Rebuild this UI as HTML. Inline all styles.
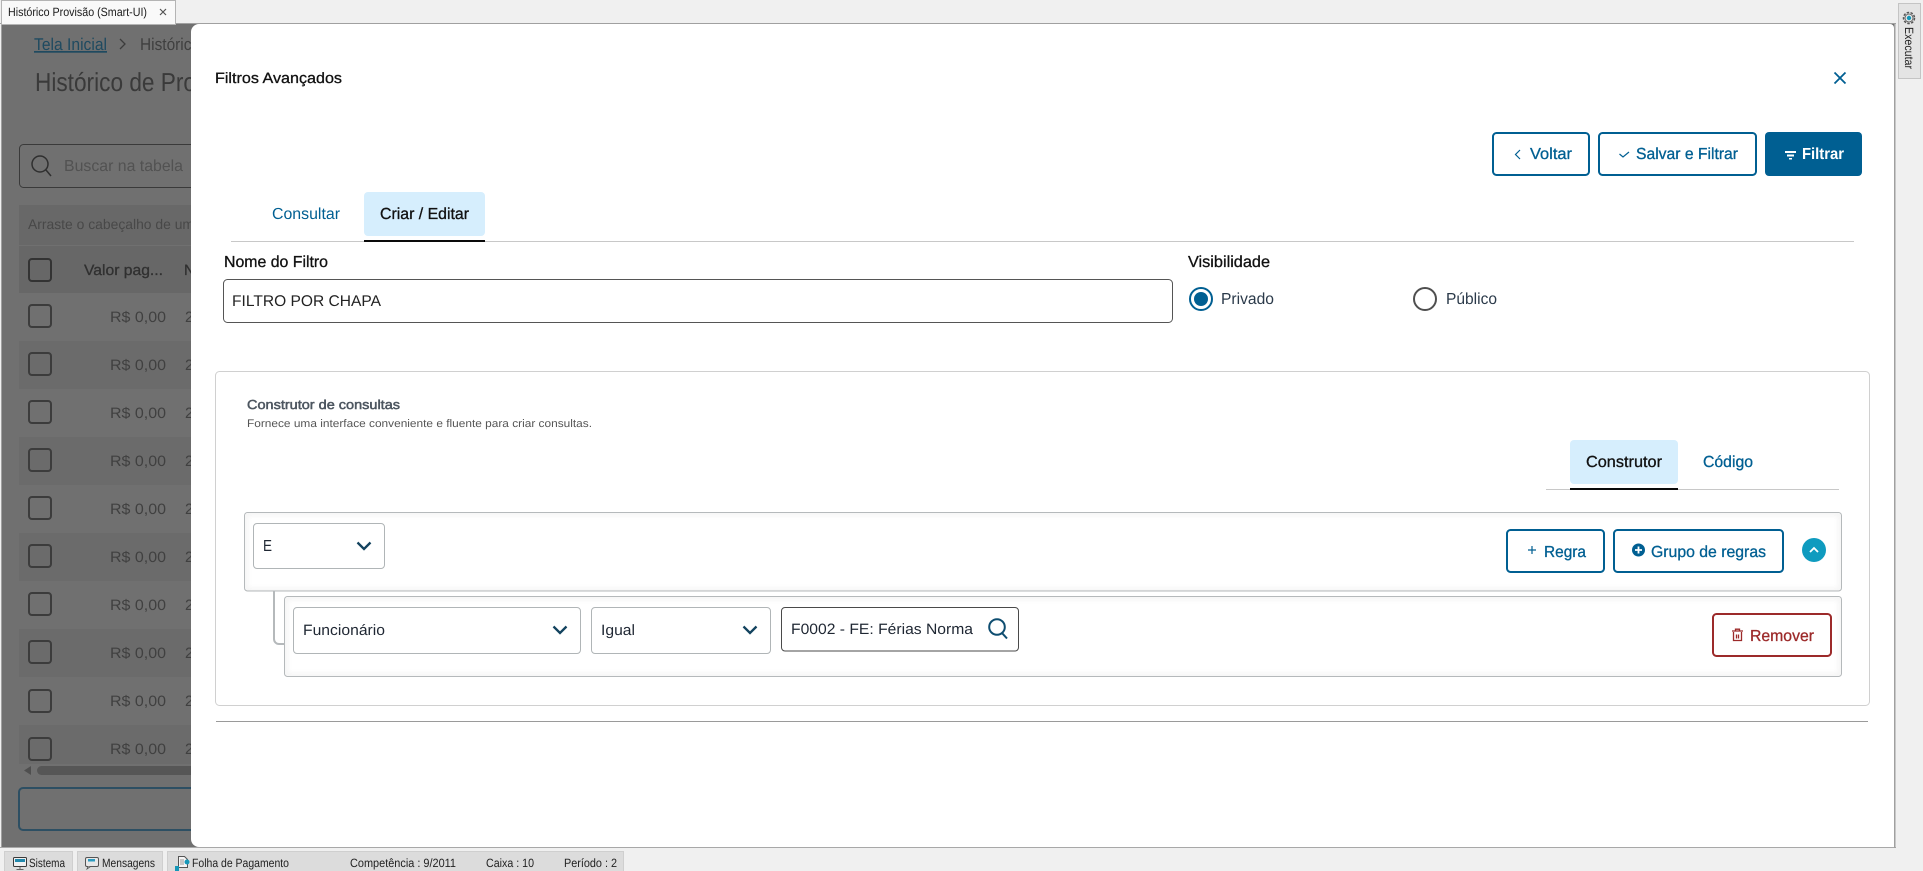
<!DOCTYPE html>
<html lang="pt-BR"><head><meta charset="utf-8"><title>Filtros Avançados</title>
<style>
html,body{margin:0;padding:0;width:1923px;height:871px;overflow:hidden;background:#f0f0f0}
svg{display:block;position:absolute;left:0;top:0}
text{font-family:"Liberation Sans",sans-serif;}
.sb{stroke-width:.3px;paint-order:stroke}
</style></head><body>
<svg width="1923" height="871" viewBox="0 0 1923 871" xmlns="http://www.w3.org/2000/svg" text-rendering="geometricPrecision">
<defs>
<filter id="bl" x="-5%" y="-20%" width="110%" height="140%"><feGaussianBlur stdDeviation="3"/></filter>
<clipPath id="c1"><rect x="245" y="513" width="1596" height="78" rx="3"/></clipPath>
<clipPath id="c2"><rect x="285" y="597" width="1556" height="79" rx="3"/></clipPath>
</defs>
<rect width="1923" height="871" fill="#f0f0f0"/>
<!-- background app dimmed -->
<rect x="2" y="24" width="1893" height="824" fill="#707070"/>
<rect x="19" y="205" width="175" height="40" fill="#686868"/>
<rect x="19" y="246" width="175" height="47" fill="#676767"/>
<g fill="#6b6b6b">
<rect x="19" y="341" width="175" height="48"/><rect x="19" y="437" width="175" height="48"/><rect x="19" y="533" width="175" height="48"/><rect x="19" y="629" width="175" height="48"/><rect x="19" y="725" width="175" height="39"/></g>
<text x="34" y="50" font-size="17" fill="#1f4a60" textLength="73" lengthAdjust="spacingAndGlyphs" text-decoration="underline">Tela Inicial</text>
<path d="M120 39l5 5-5 5" fill="none" stroke="#3c3c3c" stroke-width="1.3"/>
<text x="140" y="50" font-size="17" fill="#3f3f3f" textLength="60" lengthAdjust="spacingAndGlyphs">Histórico</text>
<text x="35" y="91" font-size="26" fill="#3a3a3a" textLength="161" lengthAdjust="spacingAndGlyphs">Histórico de Pro</text>
<rect x="19.500" y="144.500" width="190" height="43" rx="4" fill="none" stroke="#3a3a3a"/>
<circle cx="40" cy="164" r="8" fill="none" stroke="#2f2f2f" stroke-width="1.5"/><path d="M46 170l5 6" stroke="#2f2f2f" stroke-width="1.5"/>
<text x="64" y="171" font-size="16" fill="#525252" textLength="119" lengthAdjust="spacingAndGlyphs">Buscar na tabela</text>
<text x="28" y="229" font-size="14" fill="#484848" textLength="166" lengthAdjust="spacingAndGlyphs">Arraste o cabeçalho de um</text>
<rect x="29" y="259" width="22" height="22" rx="3" fill="none" stroke="#333" stroke-width="2"/>
<text x="84" y="275" font-size="15" class="sb" stroke="#303030" fill="#303030" textLength="79" lengthAdjust="spacingAndGlyphs">Valor pag...</text>
<text x="184" y="275" font-size="15" class="sb" stroke="#303030" fill="#303030">N</text>
<g fill="none" stroke="#3c3c3c" stroke-width="2">
<rect x="29" y="305" width="22" height="22" rx="3"/><rect x="29" y="353" width="22" height="22" rx="3"/><rect x="29" y="401" width="22" height="22" rx="3"/><rect x="29" y="449" width="22" height="22" rx="3"/><rect x="29" y="497" width="22" height="22" rx="3"/><rect x="29" y="545" width="22" height="22" rx="3"/><rect x="29" y="593" width="22" height="22" rx="3"/><rect x="29" y="641" width="22" height="22" rx="3"/><rect x="29" y="690" width="22" height="22" rx="3"/><rect x="29" y="738" width="22" height="22" rx="3"/></g>
<g font-size="15" fill="#404040">
<text x="110" y="322" textLength="56" lengthAdjust="spacingAndGlyphs">R$ 0,00</text><text x="185" y="322">2</text>
<text x="110" y="370" textLength="56" lengthAdjust="spacingAndGlyphs">R$ 0,00</text><text x="185" y="370">2</text>
<text x="110" y="418" textLength="56" lengthAdjust="spacingAndGlyphs">R$ 0,00</text><text x="185" y="418">2</text>
<text x="110" y="466" textLength="56" lengthAdjust="spacingAndGlyphs">R$ 0,00</text><text x="185" y="466">2</text>
<text x="110" y="514" textLength="56" lengthAdjust="spacingAndGlyphs">R$ 0,00</text><text x="185" y="514">2</text>
<text x="110" y="562" textLength="56" lengthAdjust="spacingAndGlyphs">R$ 0,00</text><text x="185" y="562">2</text>
<text x="110" y="610" textLength="56" lengthAdjust="spacingAndGlyphs">R$ 0,00</text><text x="185" y="610">2</text>
<text x="110" y="658" textLength="56" lengthAdjust="spacingAndGlyphs">R$ 0,00</text><text x="185" y="658">2</text>
<text x="110" y="706" textLength="56" lengthAdjust="spacingAndGlyphs">R$ 0,00</text><text x="185" y="706">2</text>
<text x="110" y="754" textLength="56" lengthAdjust="spacingAndGlyphs">R$ 0,00</text><text x="185" y="754">2</text>
</g>
<path d="M31 766l-7 4.500 7 4.500z" fill="#4f4f4f"/>
<rect x="37" y="766" width="170" height="9" rx="4.500" fill="#565656"/>
<rect x="19" y="788" width="190" height="42" rx="4" fill="none" stroke="#2d4f63" stroke-width="2"/>
<!-- frame lines -->
<rect x="0" y="23" width="1896" height="1" fill="#a0a0a0"/>
<rect x="1" y="24" width="1" height="824" fill="#a0a0a0"/>
<rect x="0" y="847" width="1896" height="1" fill="#a8a8a8"/>
<rect x="1894" y="24" width="1.500" height="824" fill="#a0a0a0"/>
<!-- top tab -->
<rect x="1.500" y="0.500" width="174" height="24" fill="#f9f9f9" stroke="#b4b4b4"/>
<rect x="2" y="22" width="173" height="2" fill="#f9f9f9"/>
<text x="8" y="16" font-size="12" fill="#1a1a1a" textLength="139" lengthAdjust="spacingAndGlyphs">Histórico Provisão (Smart-UI)</text>
<path d="M160 9l6 6m0-6l-6 6" stroke="#555" stroke-width="1.200"/>
<!-- executar -->
<rect x="1898.500" y="3.500" width="22" height="75" fill="#e4e4e4" stroke="#c4c4c4"/>
<circle cx="1909" cy="18" r="5.500" fill="none" stroke="#555" stroke-width="1.500" stroke-dasharray="2.500 1.400"/>
<circle cx="1909" cy="18" r="4" fill="#e8e8e8" stroke="#555" stroke-width=".8"/>
<circle cx="1909" cy="18" r="2.200" fill="#1597b8"/>
<text transform="translate(1905,27) rotate(90)" font-size="12" fill="#222" textLength="42" lengthAdjust="spacingAndGlyphs">Executar</text>
<!-- modal -->
<path d="M191 32a8 8 0 0 1 8-8H1890a4 4 0 0 1 4 4V847H199a8 8 0 0 1-8-8z" fill="#fff"/>
<text x="215" y="83" font-size="15" class="sb" stroke="#111" fill="#111" textLength="127" lengthAdjust="spacingAndGlyphs">Filtros Avançados</text>
<path d="M1834.500 72.500l11 11m0-11l-11 11" stroke="#005f92" stroke-width="1.800" fill="none"/>
<!-- buttons -->
<rect x="1493" y="133" width="96" height="42" rx="3.500" fill="#fff" stroke="#005f92" stroke-width="2"/>
<path d="M1520 150l-4.500 4.500 4.500 4.500" fill="none" stroke="#005f92" stroke-width="1.200"/>
<text x="1530" y="159" font-size="16" class="sb" stroke="#005f92" fill="#005f92" textLength="42" lengthAdjust="spacingAndGlyphs">Voltar</text>
<rect x="1599" y="133" width="157" height="42" rx="3.500" fill="#fff" stroke="#005f92" stroke-width="2"/>
<path d="M1619.500 154l3.500 3 6-5" fill="none" stroke="#005f92" stroke-width="1.200"/>
<text x="1636" y="159" font-size="16" class="sb" stroke="#005f92" fill="#005f92" textLength="102" lengthAdjust="spacingAndGlyphs">Salvar e Filtrar</text>
<rect x="1765" y="132" width="97" height="44" rx="4" fill="#005f92"/>
<path d="M1785 151h11v2h-11zM1787 154.500h7v2h-7zM1789 158h3v1.500h-3z" fill="#fff"/>
<text x="1802" y="159" font-size="16" font-weight="700" fill="#fff" textLength="42" lengthAdjust="spacingAndGlyphs">Filtrar</text>
<!-- tabs -->
<rect x="231" y="241" width="1623" height="1" fill="#c8c8c8"/>
<text x="272" y="219" font-size="16" fill="#005f92" textLength="68" lengthAdjust="spacingAndGlyphs">Consultar</text>
<rect x="364" y="192" width="121" height="44" rx="4" fill="#d6eefd"/>
<rect x="364" y="240" width="121" height="2" fill="#0a0a0a"/>
<text x="380" y="219" font-size="16" fill="#111" class="sb" stroke="#111" textLength="89" lengthAdjust="spacingAndGlyphs">Criar / Editar</text>
<text x="224" y="267" font-size="16" class="sb" stroke="#111" fill="#111" textLength="104" lengthAdjust="spacingAndGlyphs">Nome do Filtro</text>
<rect x="223.500" y="279.500" width="949" height="43" rx="4" fill="#fff" stroke="#555"/>
<text x="232" y="306" font-size="15.500" fill="#222" textLength="149" lengthAdjust="spacingAndGlyphs">FILTRO POR CHAPA</text>
<text x="1188" y="267" font-size="16" class="sb" stroke="#111" fill="#111" textLength="82" lengthAdjust="spacingAndGlyphs">Visibilidade</text>
<circle cx="1201" cy="299" r="11" fill="#fff" stroke="#005f92" stroke-width="2"/><circle cx="1201" cy="299" r="7" fill="#005f92"/>
<text x="1221" y="304" font-size="16" fill="#2b3a4a" textLength="53" lengthAdjust="spacingAndGlyphs">Privado</text>
<circle cx="1425" cy="299" r="11" fill="#fff" stroke="#4f4f4f" stroke-width="2"/>
<text x="1446" y="304" font-size="16" fill="#2b3a4a" textLength="51" lengthAdjust="spacingAndGlyphs">Público</text>
<!-- card -->
<rect x="215.500" y="371.500" width="1654" height="334" rx="4" fill="#fff" stroke="#d0d0d0"/>
<text x="247" y="409" font-size="13" stroke-width=".5" stroke="#4d5660" fill="#4d5660" textLength="153" lengthAdjust="spacingAndGlyphs">Construtor de consultas</text>
<text x="247" y="427" font-size="11" fill="#555" textLength="345" lengthAdjust="spacingAndGlyphs">Fornece uma interface conveniente e fluente para criar consultas.</text>
<rect x="1546" y="489" width="293" height="1" fill="#c8c8c8"/>
<rect x="1570" y="440" width="108" height="44" rx="4" fill="#d6eefd"/>
<rect x="1570" y="488" width="108" height="2" fill="#0a0a0a"/>
<text x="1586" y="467" font-size="16" class="sb" stroke="#111" fill="#111" textLength="76" lengthAdjust="spacingAndGlyphs">Construtor</text>
<text x="1703" y="467" font-size="16" fill="#005f92" class="sb" stroke="#005f92" textLength="50" lengthAdjust="spacingAndGlyphs">Código</text>
<!-- connector -->
<path d="M274 591V639a5 5 0 0 0 5 5h6" fill="none" stroke="#b5b9bb" stroke-width="2"/>
<!-- rule group -->
<rect x="244.500" y="512.500" width="1597" height="78.500" rx="3" fill="#fff" stroke="#b5b9bb"/>
<g clip-path="url(#c1)"><rect x="245" y="513" width="1596" height="78" rx="3" fill="none" stroke="#000" stroke-opacity=".08" stroke-width="3" filter="url(#bl)"/></g>
<rect x="253.500" y="523.500" width="131" height="45" rx="3.500" fill="#fff" stroke="#b0b5b7"/>
<text x="263" y="551" font-size="16" fill="#1f2733" textLength="9" lengthAdjust="spacingAndGlyphs">E</text>
<path d="M357.500 542.500l6.500 6.500 6.500-6.500" fill="none" stroke="#13435f" stroke-width="2.300"/>
<rect x="1507" y="530" width="97" height="42" rx="3.500" fill="#fff" stroke="#005f92" stroke-width="2"/>
<path d="M1532 546v8m-4 -4h8" stroke="#005f92" stroke-width="1.200"/>
<text x="1544" y="557" font-size="16" class="sb" stroke="#005f92" fill="#005f92" textLength="42" lengthAdjust="spacingAndGlyphs">Regra</text>
<rect x="1614" y="530" width="169" height="42" rx="3.500" fill="#fff" stroke="#005f92" stroke-width="2"/>
<circle cx="1638.500" cy="550" r="6.500" fill="#005f92"/><path d="M1638.500 546.500v7m-3.500-3.500h7" stroke="#fff" stroke-width="1.800"/>
<text x="1651" y="557" font-size="16" class="sb" stroke="#005f92" fill="#005f92" textLength="115" lengthAdjust="spacingAndGlyphs">Grupo de regras</text>
<circle cx="1814" cy="550" r="12" fill="#0f9bbf"/>
<path d="M1810 552l4-4 4 4" fill="none" stroke="#fff" stroke-width="1.800"/>
<!-- rule -->
<rect x="284.500" y="596.500" width="1557" height="80" rx="3" fill="#fff" stroke="#b5b9bb"/>
<g clip-path="url(#c2)"><rect x="285" y="597" width="1556" height="79" rx="3" fill="none" stroke="#000" stroke-opacity=".08" stroke-width="3" filter="url(#bl)"/></g>
<rect x="293.500" y="607.500" width="287" height="46" rx="3.500" fill="#fff" stroke="#b0b5b7"/>
<text x="303" y="635" font-size="15" fill="#1f2733" textLength="82" lengthAdjust="spacingAndGlyphs">Funcionário</text>
<path d="M553.500 626.500l6.500 6.500 6.500-6.500" fill="none" stroke="#13435f" stroke-width="2.300"/>
<rect x="591.500" y="607.500" width="179" height="46" rx="3.500" fill="#fff" stroke="#b0b5b7"/>
<text x="601" y="635" font-size="15" fill="#1f2733" textLength="34" lengthAdjust="spacingAndGlyphs">Igual</text>
<path d="M743.500 626.500l6.500 6.500 6.500-6.500" fill="none" stroke="#13435f" stroke-width="2.300"/>
<rect x="781.500" y="607.500" width="237" height="43.500" rx="3.500" fill="#fff" stroke="#4a4a4a"/>
<text x="791" y="634" font-size="15" fill="#1f2733" textLength="182" lengthAdjust="spacingAndGlyphs">F0002 - FE: Férias Norma</text>
<circle cx="997" cy="627" r="7.800" fill="none" stroke="#0e4d70" stroke-width="2"/><path d="M1002 633l5 5.500" stroke="#0e4d70" stroke-width="2"/>
<rect x="1713" y="614" width="118" height="42" rx="3.500" fill="#fff" stroke="#9c2a2a" stroke-width="2"/>
<path d="M1732 631h11M1735.500 631v-1.800h4v1.800M1733.500 632v8.500h8V632M1736.500 634.500v4M1738.500 634.500v4" fill="none" stroke="#9c2a2a" stroke-width="1.300"/>
<text x="1750" y="641" font-size="16" class="sb" stroke="#9c2a2a" fill="#9c2a2a" textLength="64" lengthAdjust="spacingAndGlyphs">Remover</text>
<rect x="216" y="721" width="1652" height="1" fill="#9a9a9a"/>
<!-- status bar -->
<rect x="4.500" y="851.500" width="68" height="20" fill="#dcdcdc" stroke="#cfcfcf"/>
<rect x="77.500" y="851.500" width="85" height="20" fill="#dcdcdc" stroke="#cfcfcf"/>
<rect x="167.500" y="851.500" width="456" height="20" fill="#dcdcdc" stroke="#cfcfcf"/>
<rect x="13.500" y="857.500" width="13" height="9" rx="1" fill="#f0f0f0" stroke="#3a3a3a"/><rect x="15" y="859" width="10" height="3" fill="#2188ab"/><path d="M20 867v2m-3.500 .5h7" stroke="#666"/>
<rect x="85.500" y="857.500" width="13" height="9" rx="1.500" fill="#e8e8e8" stroke="#555"/><rect x="88" y="859" width="7" height="2.500" fill="#2c9bc0"/><path d="M88 866.500l-1 2.500 3.500-2.500" fill="#e8e8e8" stroke="#555" stroke-width=".8"/>
<path d="M178.500 856.500h6l3 3v8h-9z" fill="#f5f5f5" stroke="#555"/><path d="M180 860h4m-4 2h4m-4 2h4" stroke="#777" stroke-width=".8"/><circle cx="187" cy="862" r="2.500" fill="#1597b8"/><rect x="175" y="866" width="4" height="5" fill="#1597b8"/>
<g font-size="12" fill="#222">
<text x="29" y="867" textLength="36" lengthAdjust="spacingAndGlyphs">Sistema</text>
<text x="102" y="867" textLength="53" lengthAdjust="spacingAndGlyphs">Mensagens</text>
<text x="192" y="867" textLength="97" lengthAdjust="spacingAndGlyphs">Folha de Pagamento</text>
<text x="350" y="867" textLength="106" lengthAdjust="spacingAndGlyphs">Competência : 9/2011</text>
<text x="486" y="867" textLength="48" lengthAdjust="spacingAndGlyphs">Caixa : 10</text>
<text x="564" y="867" textLength="53" lengthAdjust="spacingAndGlyphs">Período : 2</text>
</g>
</svg>
</body></html>
